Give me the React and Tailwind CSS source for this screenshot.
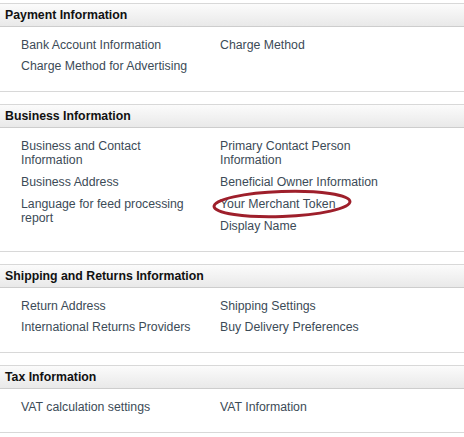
import React from "react";

const sections = [
  {
    title: "Payment Information",
    gap: "gap-[7px]",
    left: ["Bank Account Information", "Charge Method for Advertising"],
    right: ["Charge Method"],
  },
  {
    title: "Business Information",
    gap: "gap-[8px]",
    left: [
      "Business and Contact Information",
      "Business Address",
      "Language for feed processing report",
    ],
    right: [
      "Primary Contact Person Information",
      "Beneficial Owner Information",
      "Your Merchant Token",
      "Display Name",
    ],
  },
  {
    title: "Shipping and Returns Information",
    gap: "gap-[7px]",
    left: ["Return Address", "International Returns Providers"],
    right: ["Shipping Settings", "Buy Delivery Preferences"],
  },
  {
    title: "Tax Information",
    gap: "gap-[7px]",
    left: ["VAT calculation settings"],
    right: ["VAT Information"],
  },
];

function LinkItem({ label }) {
  const circled = label === "Your Merchant Token";
  return (
    <div className="relative w-[175px] leading-[14px] text-[#3c4b57]">
      {label}
      {circled && (
        <svg
          className="absolute left-[-10px] top-[-10px] pointer-events-none"
          width="146"
          height="34"
          viewBox="0 0 146 34"
        >
          <ellipse
            cx="72"
            cy="17"
            rx="68"
            ry="12.5"
            fill="none"
            stroke="#9e1f2b"
            strokeWidth="3"
            transform="rotate(-2 72 17)"
          />
        </svg>
      )}
    </div>
  );
}

function Section({ section }) {
  return (
    <div className="border-y border-[#d8d8d8] bg-white">
      <div className="h-[23px] flex items-center px-[5px] border-b border-[#cdcdcd] bg-gradient-to-b from-[#fbfbfb] to-[#e9e9e9] font-bold text-[#111]">
        {section.title}
      </div>
      <div className="grid grid-cols-[199px_1fr] pl-[21px] pt-[11px] pb-[18px]">
        <div className={`flex flex-col ${section.gap}`}>
          {section.left.map((l) => (
            <LinkItem key={l} label={l} />
          ))}
        </div>
        <div className={`flex flex-col ${section.gap}`}>
          {section.right.map((l) => (
            <LinkItem key={l} label={l} />
          ))}
        </div>
      </div>
    </div>
  );
}

export default function App() {
  return (
    <div
      className="w-[464px] h-[437px] bg-white pt-[3px] flex flex-col gap-[12px] text-[12.3px] overflow-hidden"
      style={{ fontFamily: '"Liberation Sans", Arial, sans-serif' }}
    >
      {sections.map((s) => (
        <Section key={s.title} section={s} />
      ))}
    </div>
  );
}
